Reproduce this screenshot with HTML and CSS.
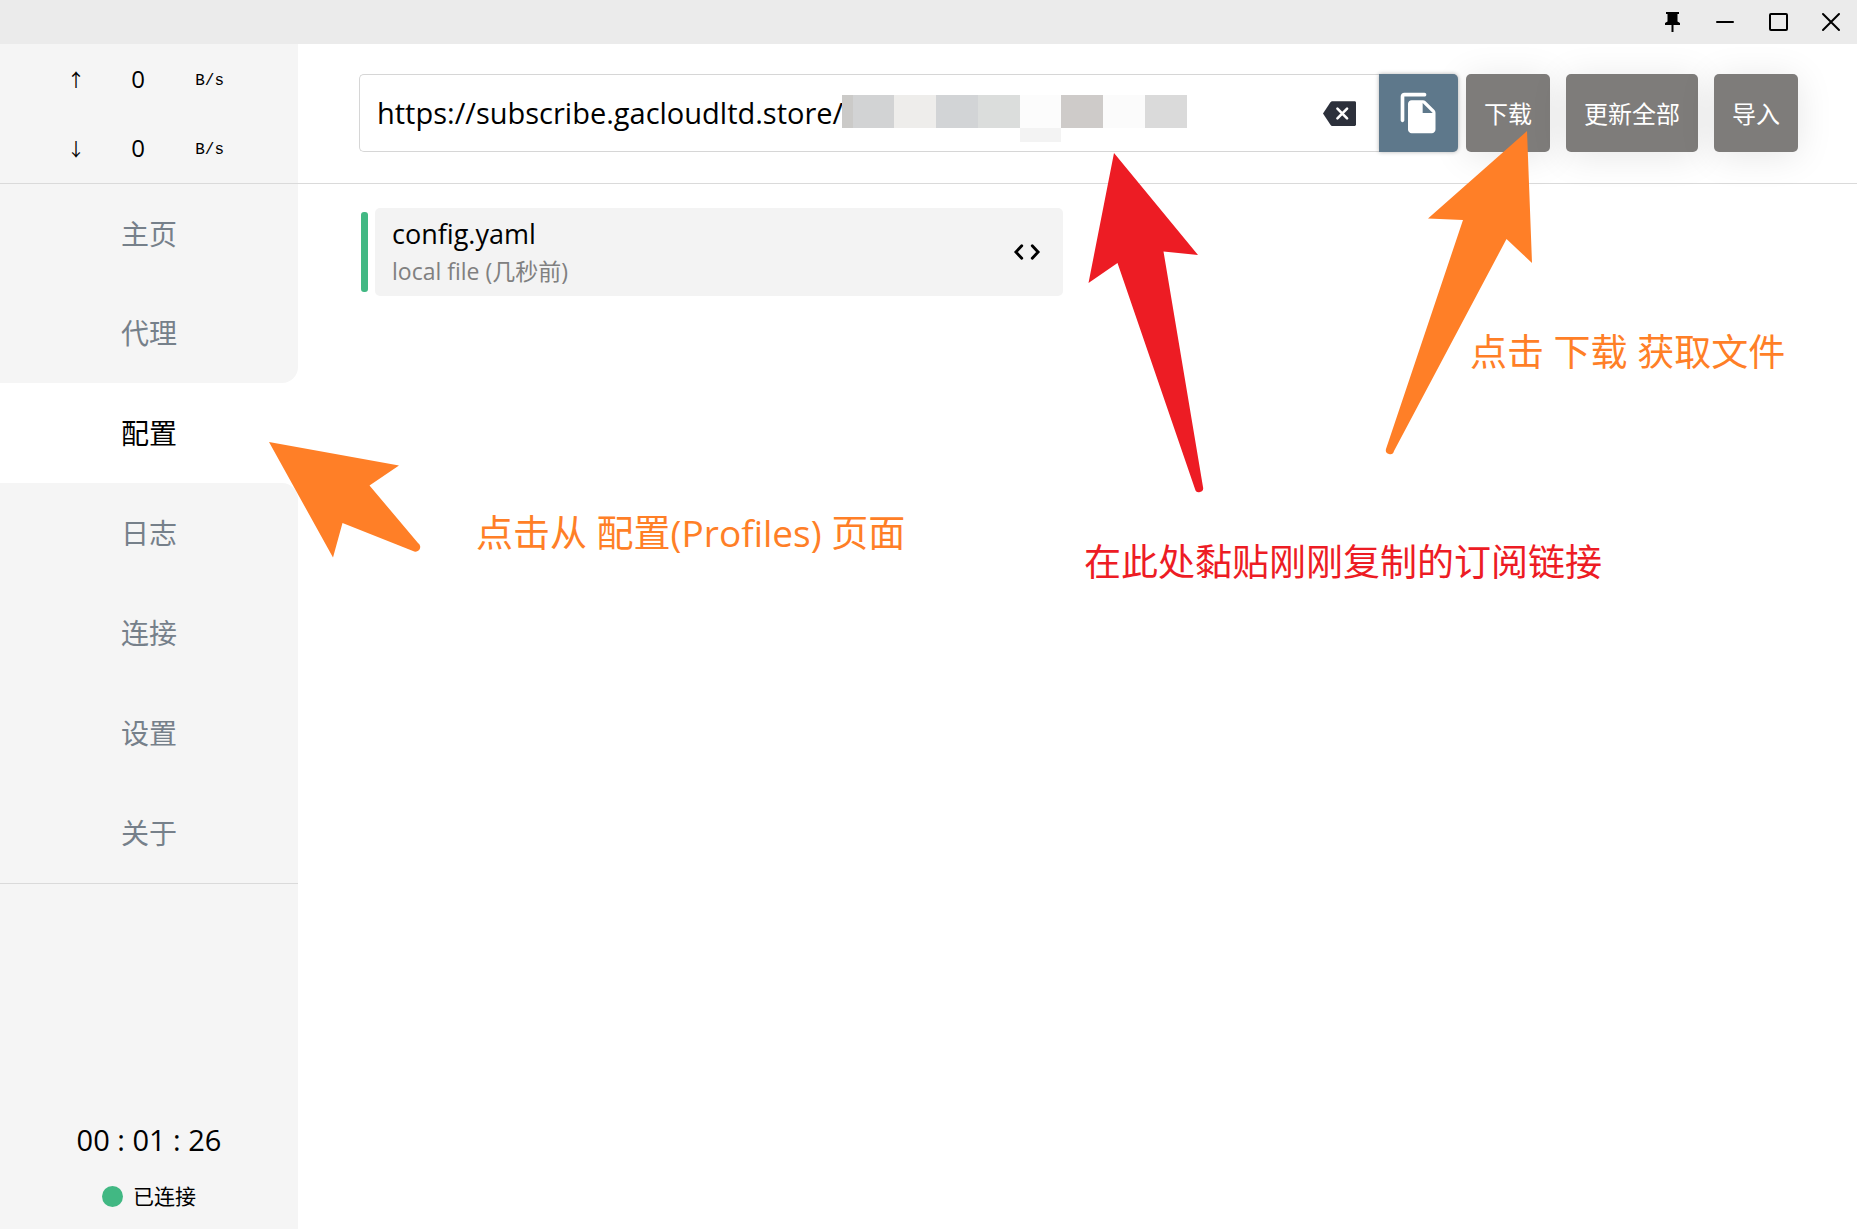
FILE: index.html
```html
<!DOCTYPE html>
<html lang="zh-CN">
<head>
<meta charset="utf-8">
<meta name="viewport" content="width=device-width, initial-scale=1">
<title>配置</title>
<link rel="stylesheet" href="styles.css">
</head>
<body>
<div class="app">
  <header class="titlebar">
    <button class="win-btn" type="button" aria-label="Pin">
      <svg width="24" height="24" viewBox="0 0 24 24"><path d="M6 2h13v2h-1.500v7.500L20 13v2h-6.500v7h-2v-7H5v-2l2.500-1.500V4H6z"/></svg>
    </button>
    <button class="win-btn" type="button" aria-label="Minimize">
      <svg width="24" height="24" viewBox="0 0 24 24"><path class="line" d="M4 12h16"/></svg>
    </button>
    <button class="win-btn" type="button" aria-label="Maximize">
      <svg width="24" height="24" viewBox="0 0 24 24"><rect class="line" x="4" y="4" width="17" height="16" rx="1"/></svg>
    </button>
    <button class="win-btn" type="button" aria-label="Close">
      <svg width="24" height="24" viewBox="0 0 24 24"><path class="line" d="M4 4l16 16M20 4L4 20"/></svg>
    </button>
  </header>

  <div class="body">
    <aside class="sidebar">
      <div class="traffic">
        <div class="traffic-row"><span class="arrow">↑</span><span class="rate">0</span><span class="unit">B/s</span></div>
        <div class="traffic-row"><span class="arrow">↓</span><span class="rate">0</span><span class="unit">B/s</span></div>
      </div>
      <nav class="menu">
        <a class="item" href="#home">主页</a>
        <a class="item before" href="#proxies">代理</a>
        <a class="item active" href="#profiles" aria-current="page">配置</a>
        <a class="item after" href="#logs">日志</a>
        <a class="item" href="#connections">连接</a>
        <a class="item" href="#settings">设置</a>
        <a class="item" href="#about">关于</a>
      </nav>
      <div class="status">
        <div class="timer">00 : 01 : 26</div>
        <div class="state"><span class="dot"></span>已连接</div>
      </div>
    </aside>

    <main class="main">
      <div class="toolbar">
        <div class="url-box">
          <input class="url" type="text" aria-label="URL" value="https://subscribe.gacloudltd.store/">
          <div class="mask" aria-hidden="true">
            <i class="m1"></i><i class="m2"></i><i class="m3"></i><i class="m4"></i><i class="m5"></i><i class="m6"></i><i class="m7"></i><i class="m8"></i><i class="m9"></i>
          </div>
          <button class="clear" type="button" aria-label="Clear">
            <svg width="33" height="33" viewBox="0 0 24 24"><path fill="#2c303b" d="M23 3H7c-.7 0-1.200.35-1.600.88L0 12l5.400 8.110c.4.530.9.890 1.600.89h16c.6 0 1-.4 1-1V4c0-.6-.4-1-1-1z"/><path d="M10.500 8.500l7 7M17.500 8.500l-7 7" stroke="#fff" stroke-width="1.900" stroke-linecap="round"/></svg>
          </button>
          <button class="copy" type="button" aria-label="Paste">
            <svg width="44" height="44" viewBox="0 0 24 24"><path fill="#fff" d="M15 1H4c-1.100 0-2 .9-2 2v13c0 .55.45 1 1 1s1-.45 1-1V3h11c.55 0 1-.45 1-1s-.45-1-1-1zm.590 4.590l4.830 4.830c.37.370.58.880.58 1.410V21c0 1.100-.9 2-2 2H7.990C6.890 23 6 22.100 6 21l.010-14c0-1.100.89-2 1.990-2h6.170c.53 0 1.040.210 1.420.590zM14 12h5.500L14 6.500z"/></svg>
          </button>
        </div>
        <div class="actions">
          <button class="btn" type="button">下载</button>
          <button class="btn" type="button">更新全部</button>
          <button class="btn" type="button">导入</button>
        </div>
      </div>

      <div class="profiles">
        <div class="profile">
          <span class="marker"></span>
          <div class="card">
            <div class="info">
              <div class="name">config.yaml</div>
              <div class="meta">local file (几秒前)</div>
            </div>
            <button class="code" type="button" aria-label="Edit">
              <svg width="36" height="36" viewBox="0 0 24 24"><path fill="none" stroke="#000" stroke-width="1.900" stroke-linecap="round" d="M8.500 7.800L4.600 12l3.900 4.200M15.500 7.800L19.400 12l-3.900 4.200"/></svg>
            </button>
          </div>
        </div>
      </div>
    </main>
  </div>

  <svg class="arrows" width="1857" height="1229" viewBox="0 0 1857 1229" aria-hidden="true">
    <path fill="#ff7f27" d="M269 442L399 465.500 369.500 485.500 418 543A4.500 4.500 0 0 1 413 551L342.500 523 333 557.500z"/>
    <path fill="#ed1c24" d="M1114 153L1198 255 1163.500 251.500 1203 487A4 4 0 0 1 1195 489L1117.500 263 1088.500 283z"/>
    <path fill="#ff7f27" d="M1527 131L1532 263 1506.500 239 1394 451A4 4 0 0 1 1386 449L1463 220 1428 218.500z"/>
  </svg>
  <p class="note note-menu">点击从 配置(Profiles) 页面</p>
  <p class="note note-url">在此处黏贴刚刚复制的订阅链接</p>
  <p class="note note-download">点击 下载 获取文件</p>
</div>
</body>
</html>
```
FILE: styles.css
```css
* { box-sizing: border-box; }

body {
  margin: 0;
  background: #fff;
  color: #000;
  font-family: "Open Sans", "Noto Sans CJK SC", sans-serif;
  font-size: 24px;
}

button {
  margin: 0;
  padding: 0;
  border: 0;
  background: none;
  font: inherit;
  color: inherit;
}

svg { display: block; }

.app {
  position: relative;
  display: flex;
  flex-direction: column;
  min-height: 100vh;
  overflow: hidden;
}

/* Window title bar */
.titlebar {
  display: flex;
  justify-content: flex-end;
  align-items: center;
  gap: 29px;
  height: 44px;
  padding-right: 14px;
  background: #ebebeb;
}

.line {
  fill: none;
  stroke: #000;
  stroke-width: 2;
  stroke-linecap: round;
}

.body {
  flex: 1;
  display: flex;
}

/* Sidebar */
.sidebar {
  flex: none;
  display: flex;
  flex-direction: column;
  width: 298px;
  background: #f5f5f5;
}

.traffic {
  height: 140px;
  border-bottom: 1px solid #dadada;
}

.traffic-row {
  display: grid;
  grid-template-columns: 32px 92px 40px;
  justify-content: start;
  align-items: center;
  height: 69px;
  padding-left: 60px;
  text-align: center;
}

.arrow {
  font-family: "Noto Sans CJK SC", sans-serif;
  font-size: 18px;
}

.unit {
  padding-top: 4px;
  font-family: "Liberation Mono", monospace;
  font-size: 16px;
  text-align: right;
}

.menu {
  background: #fff;
  border-bottom: 1px solid #dadada;
}

.item {
  display: flex;
  justify-content: center;
  align-items: center;
  height: 100px;
  padding-bottom: 2px;
  background: #f5f5f5;
  color: #76808a;
  font-size: 28px;
  text-decoration: none;
}

.item:first-child { height: 99px; }

.before { border-bottom-right-radius: 16px; }
.after { border-top-right-radius: 16px; }

.active {
  background: #fff;
  color: #000;
}

.status {
  margin-top: auto;
  padding-bottom: 17px;
  text-align: center;
}

.timer {
  font-size: 29px;
  line-height: 40px;
}

.state {
  display: flex;
  justify-content: center;
  align-items: center;
  gap: 10px;
  margin-top: 20px;
  font-size: 21px;
  line-height: 32px;
}

.dot {
  width: 21px;
  height: 21px;
  border-radius: 50%;
  background: #41b883;
}

/* Main area */
.main {
  flex: 1;
  min-width: 0;
}

.toolbar {
  display: flex;
  gap: 8px;
  height: 140px;
  padding: 30px 59px 31px 61px;
  border-bottom: 1px solid #dadada;
}

.url-box {
  position: relative;
  flex: 1;
  display: flex;
  height: 78px;
  min-width: 0;
  border: 1px solid #d6d6d6;
  border-right: 0;
  border-radius: 5px;
}

.url {
  flex: 1;
  min-width: 0;
  padding: 0 0 2px 17px;
  border: 0;
  outline: 0;
  background: none;
  color: #000;
  font-family: inherit;
  font-size: 29px;
}

.mask {
  position: absolute;
  left: 482px;
  top: 20px;
  display: flex;
}

.mask i {
  width: 42px;
  height: 33px;
}

.mask .m1 { width: 11px; background: #cbcac8; }
.mask .m2 { width: 41px; background: #d2d3d4; }
.mask .m3 { background: #eeedeb; }
.mask .m4 { background: #d2d4d6; }
.mask .m5 { background: #dbdddc; }
.mask .m6 { width: 41px; height: 47px; background: linear-gradient(#fcfcfc 33px, #f3f3f3 33px); }
.mask .m7 { background: #cecbc9; }
.mask .m8 { background: #fbfbfb; }
.mask .m9 { background: #dadada; }

.clear {
  flex: none;
  padding: 0 23px 0 0;
}

.copy {
  flex: none;
  display: flex;
  justify-content: center;
  align-items: center;
  width: 79px;
  margin: -1px 0;
  border-radius: 0 5px 5px 0;
  background: #5e788b;
  box-shadow: 0 0 4px rgba(0, 0, 0, 0.3);
}

.actions {
  display: flex;
  gap: 16px;
}

.btn {
  height: 78px;
  padding: 0 18px 2px;
  border-radius: 5px;
  background: #7e7c7a;
  color: #fff;
  box-shadow: 0 4px 36px rgba(0, 0, 0, 0.1);
  white-space: nowrap;
}

/* Profile list */
.profiles {
  display: grid;
  grid-template-columns: 1fr 1fr;
  gap: 33px;
  padding: 24px 59px 24px 63px;
}

.profile {
  display: flex;
  align-items: center;
  gap: 7px;
}

.marker {
  flex: none;
  width: 7px;
  height: 80px;
  border-radius: 3px;
  background: #41b883;
}

.card {
  flex: 1;
  display: flex;
  justify-content: space-between;
  align-items: center;
  height: 88px;
  padding: 0 18px 0 17px;
  border-radius: 5px;
  background: #f3f3f3;
}

.name {
  font-size: 27px;
  line-height: 38px;
}

.meta {
  color: #808080;
  font-size: 23px;
  line-height: 36px;
}

/* Guide annotations laid over the window */
.arrows {
  position: absolute;
  left: 0;
  top: 0;
  pointer-events: none;
}

.note {
  position: absolute;
  margin: 0;
  color: #ff7f27;
  font-size: 37px;
  line-height: 48px;
  white-space: nowrap;
}

.note-menu { left: 476px; top: 509px; }
.note-url { left: 1084px; top: 538px; color: #ed1c24; }
.note-download { left: 1470px; top: 328px; }
```
